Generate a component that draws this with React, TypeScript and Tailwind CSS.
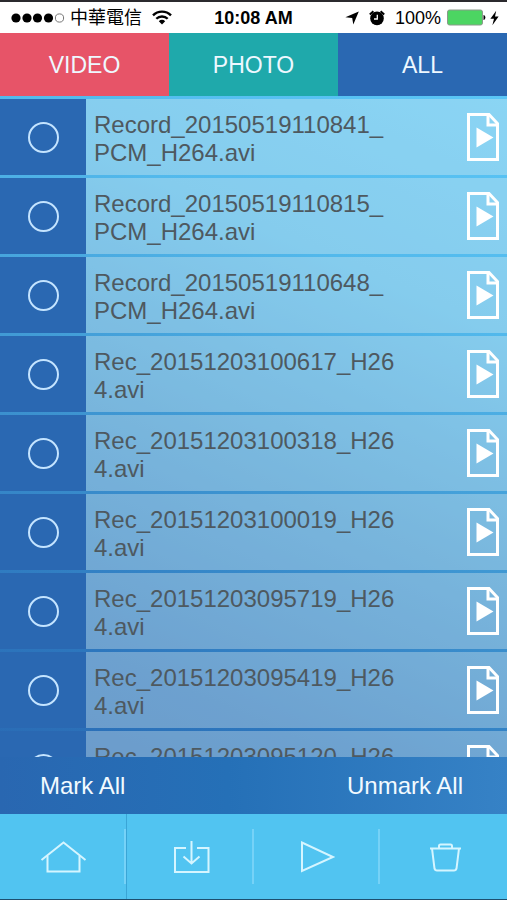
import React from 'react';

const files = [
  'Record_20150519110841_PCM_H264.avi',
  'Record_20150519110815_PCM_H264.avi',
  'Record_20150519110648_PCM_H264.avi',
  'Rec_20151203100617_H264.avi',
  'Rec_20151203100318_H264.avi',
  'Rec_20151203100019_H264.avi',
  'Rec_20151203095719_H264.avi',
  'Rec_20151203095419_H264.avi',
  'Rec_20151203095120_H264.avi',
];

const StatusBar: React.FC = () => (
  <div className="grid h-[33px] shrink-0 grid-cols-[1fr_auto_1fr] items-center border-t-2 border-[#2b2a2e] bg-white px-2 text-lg leading-none text-black">
    <div className="flex items-center pl-[3px]">
      <svg width="54" height="12" viewBox="0 0 54 12" className="mr-[5px]">
        <circle cx="5" cy="6" r="4.6" />
        <circle cx="16" cy="6" r="4.6" />
        <circle cx="26.5" cy="6" r="4.6" />
        <circle cx="37.5" cy="6" r="4.6" />
        <circle cx="48.5" cy="6" r="4.1" fill="none" stroke="#777" />
      </svg>
      <span>中華電信</span>
      <svg width="20" height="15" viewBox="0 0 20 15" className="ml-2.5" fill="none" stroke="#000">
        <path d="M1 5.4C6 .4 14 .4 19 5.4" strokeWidth="2.4" />
        <path d="M4.3 8.8C7.4 5.7 12.6 5.7 15.7 8.8" strokeWidth="2.3" />
        <path d="M6.8 11.2C8.6 9.4 11.4 9.4 13.2 11.2L10 14.6Z" fill="#000" stroke="none" />
      </svg>
    </div>
    <span className="font-bold">10:08 AM</span>
    <div className="flex items-center justify-end">
      <svg width="14" height="14" viewBox="0 0 14 14" className="mr-2.5">
        <path d="M13.8.4 8.3 13.6 7.2 7.1.4 6.2Z" />
      </svg>
      <svg width="16" height="16" viewBox="0 0 16 16" className="mr-2.5">
        <circle cx="8" cy="8.4" r="6.8" />
        <path d="M.8 4.4 4.400 1.200M15.200 4.400 11.600 1.200" stroke="#000" strokeWidth="2" />
        <path d="M8.300 4.800V9H5" stroke="#fff" strokeWidth="1.3" fill="none" />
      </svg>
      <span>100%</span>
      <svg width="39" height="17" viewBox="0 0 39 17" className="ml-[6px]">
        <rect x=".5" y="1" width="35" height="15" rx="2" fill="#4cd562" stroke="#8a9a8a" />
        <path d="M36.500 6C39 6.600 39 10.400 36.500 11Z" />
      </svg>
      <svg width="9" height="16" viewBox="0 0 9 16" className="ml-1">
        <path d="M6.2.8.4 8.8H4L2.4 15.2 8.6 6.6H5Z" />
      </svg>
    </div>
  </div>
);

const VideoFileIcon: React.FC = () => (
  <svg width="32" height="48" viewBox="0 0 32 48" fill="none" stroke="#fff" strokeWidth="3" className="shrink-0">
    <path d="M1.5 1.5H22L30.5 10.500V46.5H1.5Z" />
    <path d="M21 2V12H30.5" strokeWidth="3" />
    <path d="M9.5 14.5V34.5L26.500 24.5Z" fill="#fff" stroke="none" />
  </svg>
);

interface FileRowProps {
  name: string;
}

const FileRow: React.FC<FileRowProps> = ({ name }) => (
  <li className="flex min-h-[76px] shrink-0">
    <label className="flex w-[86px] shrink-0 items-center justify-center bg-[#2a68b2]">
      <input
        type="checkbox"
        aria-label={name}
        className="h-[31px] w-[31px] appearance-none rounded-full border-2 border-[#c4e4ff] checked:bg-[#c4e4ff]"
      />
    </label>
    <div className="flex flex-1 items-center justify-between bg-[#e6f0f2]/35 px-2">
      <span className="w-[304px] pt-[3px] text-2xl leading-7 break-all text-[#4e5960]">{name}</span>
      <VideoFileIcon />
    </div>
  </li>
);

const toolbar = [
  {
    label: 'Home',
    icon: (
      <>
        <path d="M1.5 19 23.5 1.5 45.5 19" />
        <path d="M7.5 15V30.5H39.5V15" />
      </>
    ),
  },
  {
    label: 'Download',
    icon: (
      <>
        <path d="M18 7H7V31H40.500V7H29" />
        <path d="M23.500 0V22.500M15.500 15.500 23.500 22.500 31.500 15.500" />
      </>
    ),
  },
  { label: 'Play', icon: <path d="M8 1.500V30L39 16Z" /> },
  {
    label: 'Delete',
    icon: (
      <>
        <path d="M8 7.500H39M10 7.500 12.500 27.500Q13 29.500 15 29.500H32Q34 29.500 34.500 27.500L37 7.500" />
        <path d="M17 7V5Q17 3.500 18.500 3.500H28.500Q30 3.500 30 5V7" />
      </>
    ),
  },
];

const App: React.FC = () => {
  return (
    <div className="flex h-screen flex-col overflow-hidden bg-[#51c4f1] font-['Liberation_Sans','Noto_Sans_CJK_TC',sans-serif]">
      <StatusBar />

      <nav className="grid h-[63px] shrink-0 grid-cols-3 text-[23px] text-[#eef8ff]">
        <button className="bg-[#e75468] pt-0.5">VIDEO</button>
        <button className="bg-[#1fa9ab] pt-0.5">PHOTO</button>
        <button className="bg-[#2a68b2] pt-0.5">ALL</button>
      </nav>

      <main className="flex min-h-0 flex-1 flex-col bg-[linear-gradient(204deg,#5ac6f6_0%,#52b9ec_25%,#4099d4_50%,#2d77be_78%,#2967b1_100%)]">
        <ul className="flex min-h-0 flex-1 flex-col gap-[3px] overflow-hidden pt-[3px]">
          {files.map((name) => (
            <FileRow key={name} name={name} />
          ))}
        </ul>

        <div className="flex h-[57px] shrink-0 items-center justify-between bg-[linear-gradient(90deg,#2967b1_0%,#2570b7_45%,#3682c6_100%)] pr-11 pl-10 text-2xl text-[#f2faff]">
          <button>Mark All</button>
          <button>Unmark All</button>
        </div>
      </main>

      <footer className="grid h-[86px] shrink-0 grid-cols-4 border-b border-[#1d4f70]">
        {toolbar.map(({ label, icon }) => (
          <button
            key={label}
            aria-label={label}
            className="group flex items-center first:border-r first:border-[#3aa5d6]"
          >
            <span className="flex flex-1 justify-center pl-1">
              <svg width="47" height="32" viewBox="0 0 47 32" fill="none" stroke="#d5f5ff" strokeWidth="2">
                {icon}
              </svg>
            </span>
            <span className="h-[55px] w-[2px] bg-[#76d2f7] group-last:hidden" />
          </button>
        ))}
      </footer>
    </div>
  );
};

export default App;
